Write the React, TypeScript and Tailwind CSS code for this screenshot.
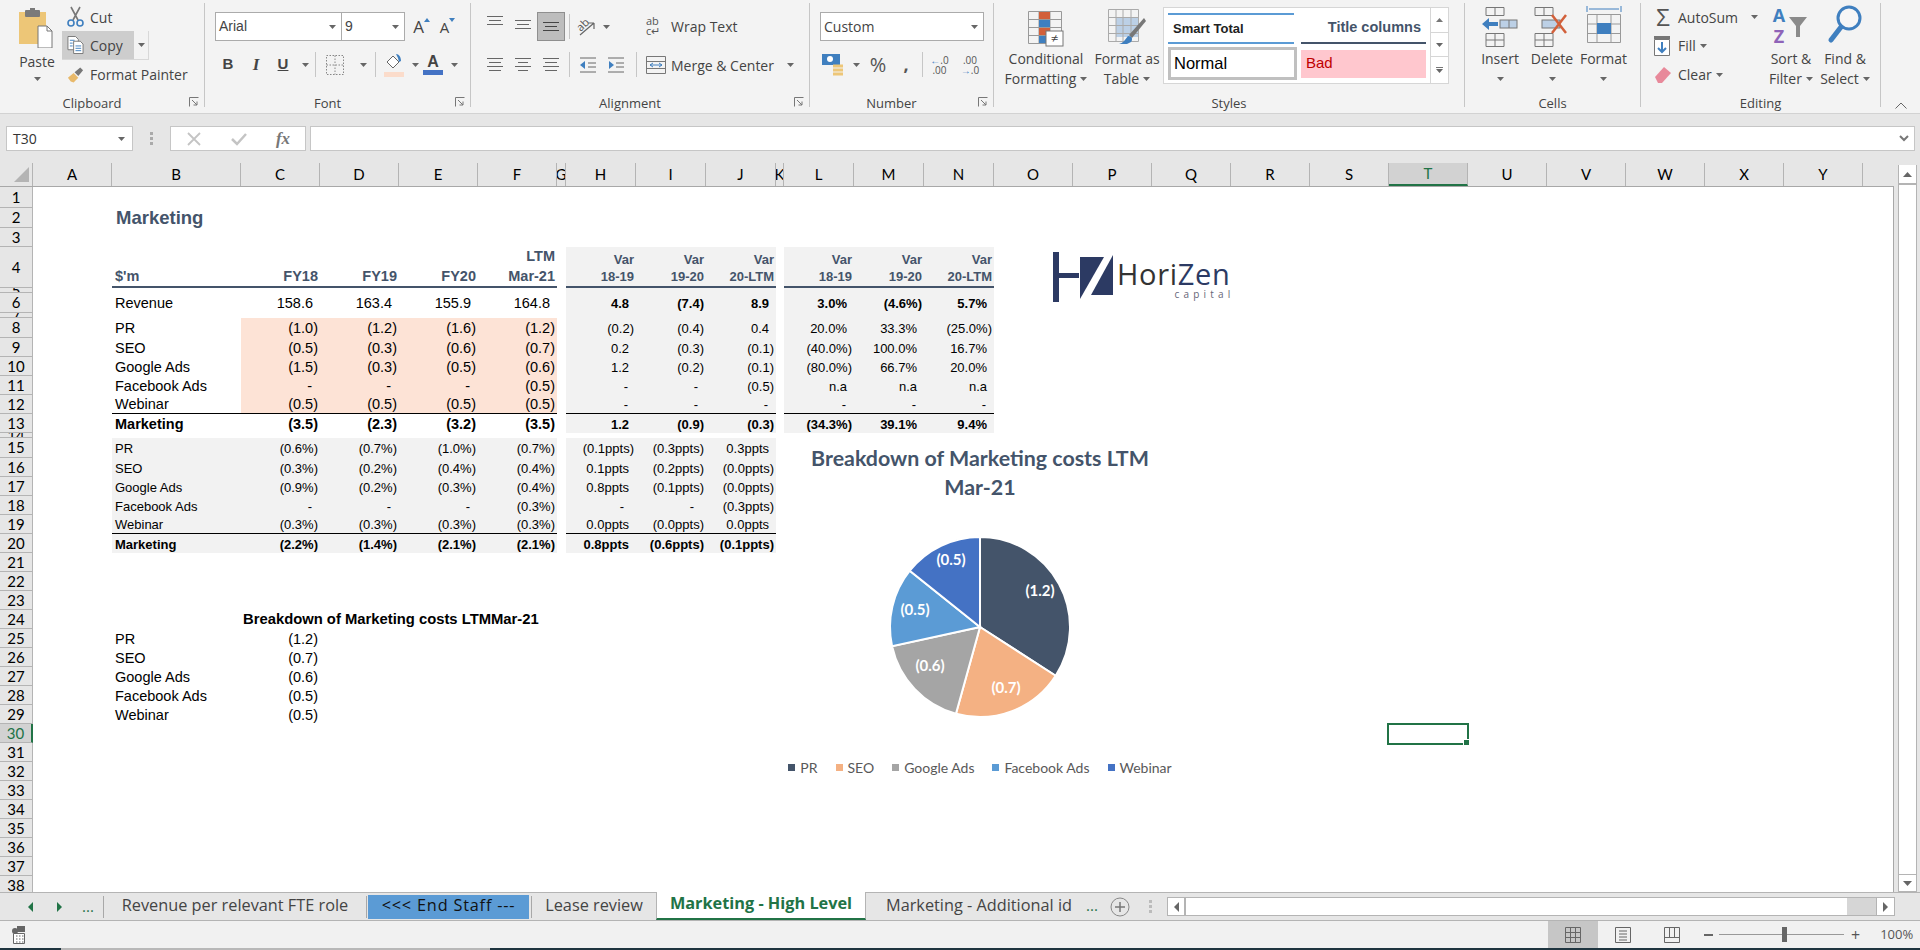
import type { ReactNode } from "react";

const Caret = ({ c = "#666" }: { c?: string }) => (
  <svg width="7" height="4" viewBox="0 0 7 4" className="inline-block shrink-0">
    <polygon points="0,0 7,0 3.5,4" fill={c} />
  </svg>
);

const Launcher = () => (
  <svg width="10" height="10" viewBox="0 0 10 10" className="shrink-0">
    <path d="M0.5 9.5V0.5H9.5M3 3l5 5M8 4.5V8H4.5" fill="none" stroke="#777" strokeWidth="1" />
  </svg>
);

const Sep = ({ h = "h-[25px]" }: { h?: string }) => <div className={`w-px bg-[#c6c6c6] ${h}`} />;

const Slot = ({ w, children }: { w: string; children?: ReactNode }) => (
  <div className={`flex h-full shrink-0 items-center justify-center ${w}`}>{children}</div>
);

const Group = ({
  w,
  label,
  launcher,
  children,
}: {
  w: string;
  label: string;
  launcher?: boolean;
  children: ReactNode;
}) => (
  <div className={`flex h-[104px] shrink-0 flex-col border-r border-[#c6c6c6] ${w}`}>
    <div className="flex h-[92px] min-h-0">{children}</div>
    <div className="flex h-[12px] items-center justify-center pt-[3px]">
      <div className={`relative w-full text-center text-[13px] leading-[16px] text-[#444] ${launcher ? "pr-[20px]" : ""}`}>
        {label}
        {launcher && (
          <span className="absolute top-[2px] right-[5px] flex">
            <Launcher />
          </span>
        )}
      </div>
    </div>
  </div>
);

const PasteIcon = () => (
  <svg width="36" height="40" viewBox="0 0 36 40">
    <rect x="0" y="4" width="27" height="32" fill="#edc677" />
    <rect x="6" y="2" width="15" height="7" rx="1" fill="#7a7a7a" />
    <rect x="11" y="0" width="5" height="4" fill="#7a7a7a" />
    <path d="M19 18h9l5 5v17H19z" fill="#fff" stroke="#777" />
    <path d="M28 18v5h5" fill="none" stroke="#777" />
  </svg>
);

const CutIcon = () => (
  <svg width="17" height="22" viewBox="0 0 17 22">
    <path d="M4 1l7 13M13 1L6 14" stroke="#777" strokeWidth="1.6" />
    <circle cx="4" cy="17" r="3" fill="none" stroke="#3f7fbf" strokeWidth="1.6" />
    <circle cx="13" cy="17" r="3" fill="none" stroke="#3f7fbf" strokeWidth="1.6" />
  </svg>
);

const CopyIcon = () => (
  <svg width="18" height="20" viewBox="0 0 18 20">
    <path d="M1 1h8l3 3v11H1z" fill="#fff" stroke="#777" />
    <path d="M7 6h7l3 3v10H7z" fill="#fff" stroke="#777" />
    <path d="M3 5h5M3 8h3M3 11h3M9 11h6M9 13.500h6M9 16h6" stroke="#3f7fbf" />
  </svg>
);

const BrushIcon = () => (
  <svg width="18" height="18" viewBox="0 0 18 18">
    <path d="M1 12l6-5 5 5-5 5-3-1z" fill="#e8b96a" />
    <path d="M8 6l6-5 3 3-5 6z" fill="#777" />
  </svg>
);

const Lines = ({ widths, active }: { widths: number[]; active?: boolean }) => (
  <svg width="16" height="16" viewBox="0 0 16 16">
    {widths.map((w, i) => (
      <rect
        key={i}
        x={(16 - w) / 2}
        y={1 + i * 4}
        width={w}
        height="1"
        fill={active ? "#444" : "#666"}
      />
    ))}
  </svg>
);

const MiniGrid = () => (
  <svg width="18" height="20" viewBox="0 0 18 20">
    <path d="M.5.500h17v19H.5zM9 .5v19M.5 10h17" fill="none" stroke="#888" strokeDasharray="1.500 1.500" />
  </svg>
);

const Clipboard = () => (
  <Group w="w-[205px]" label="Clipboard" launcher>
    <div className="flex w-[62px] flex-col items-center pt-[5px] pl-[12px] text-[14px] leading-[18px] text-[#444]">
      <PasteIcon />
      <div className="mt-[5px]">Paste</div>
      <div className="mt-[6px] flex">
        <Caret />
      </div>
    </div>
    <div className="flex flex-col text-[14px] text-[#444]">
      <div className="flex h-[28px] items-center pl-[5px]">
        <span className="mr-[6px] flex w-[17px]">
          <CutIcon />
        </span>
        Cut
      </div>
      <div className="flex h-[29px] w-[87px] border-r border-b border-[#d8d8d8]">
        <div className="flex w-[72px] items-center bg-[#cdcdcd] pl-[5px]">
          <span className="mr-[6px] flex w-[17px]">
            <CopyIcon />
          </span>
          Copy
        </div>
        <div className="flex flex-1 items-center justify-center">
          <Caret />
        </div>
      </div>
      <div className="flex h-[29px] items-center pl-[5px] whitespace-nowrap">
        <span className="mr-[6px] flex w-[17px]">
          <BrushIcon />
        </span>
        Format Painter
      </div>
    </div>
  </Group>
);

const FontGroup = () => (
  <Group w="w-[266px]" label="Font" launcher>
    <div className="flex flex-col pt-[9px] pl-[10px] text-[#444]">
      <div className="flex h-[29px] items-center">
        <div className="flex h-[29px] w-[127px] items-center justify-between border border-[#ababab] bg-white pr-[5px] pl-[3px] font-['Liberation_Sans',sans-serif] text-[14px]">
          Arial
          <Caret />
        </div>
        <div className="flex h-[29px] w-[63px] items-center justify-between border border-l-0 border-[#ababab] bg-white pr-[5px] pl-[3px] font-['Liberation_Sans',sans-serif] text-[14px]">
          9
          <Caret />
        </div>
        <div className="flex w-[26px] items-start justify-center pl-[7px] text-[17px] leading-[20px]">
          A
          <svg width="6" height="4" viewBox="0 0 6 4" className="mt-[1px]">
            <polygon points="0,4 6,4 3,0" fill="#3f7fbf" />
          </svg>
        </div>
        <div className="flex w-[26px] items-start justify-center pl-[7px] text-[15px] leading-[20px]">
          A
          <svg width="6" height="4" viewBox="0 0 6 4" className="mt-[1px]">
            <polygon points="0,0 6,0 3,4" fill="#3f7fbf" />
          </svg>
        </div>
      </div>
      <div className="mt-[9px] flex h-[29px] items-center font-['Liberation_Serif',serif] text-[17px]">
        <Slot w="w-[26px]">
          <b className="font-['Liberation_Sans',sans-serif] text-[15px]">B</b>
        </Slot>
        <Slot w="w-[30px]">
          <i className="font-bold">I</i>
        </Slot>
        <Slot w="w-[24px]">
          <b className="font-['Liberation_Sans',sans-serif] text-[15px] underline">U</b>
        </Slot>
        <Slot w="w-[20px]">
          <Caret />
        </Slot>
        <Sep />
        <Slot w="w-[38px]">
          <MiniGrid />
        </Slot>
        <Slot w="w-[4px]" />
        <Slot w="w-[10px]">
          <Caret />
        </Slot>
        <Slot w="w-[7px]" />
        <Sep />
        <Slot w="w-[36px]">
          <svg width="20" height="24" viewBox="0 0 20 24">
            <path d="M3 9l6-6 6 6-6 6z" fill="#fff" stroke="#666" />
            <path d="M12 1c3 0 5 3 5 7l-2 1-1-4z" fill="#3f7fbf" />
            <rect x="0" y="19" width="20" height="5" fill="#fbdccb" />
          </svg>
        </Slot>
        <Slot w="w-[6px]">
          <Caret />
        </Slot>
        <Slot w="w-[30px]">
          <div className="flex flex-col items-center">
            <b className="font-['Liberation_Sans',sans-serif] text-[16px] leading-[16px] text-[#444]">A</b>
            <div className="h-[5px] w-[20px] bg-[#4472c4]" />
          </div>
        </Slot>
        <Slot w="w-[12px]">
          <Caret />
        </Slot>
      </div>
    </div>
  </Group>
);

const Alignment = () => (
  <Group w="w-[339px]" label="Alignment" launcher>
    <div className="flex flex-col pt-[9px] pl-[10px]">
      <div className="flex h-[29px] items-center">
        <Slot w="w-[28px]">
          <div className="-mt-[8px] flex">
            <Lines widths={[16, 12, 16]} />
          </div>
        </Slot>
        <Slot w="w-[28px]">
          <Lines widths={[16, 12, 16]} />
        </Slot>
        <Slot w="w-[28px]">
          <div className="flex h-[29px] w-[28px] items-end justify-center border border-[#8f8f8f] bg-[#bdbdbd] pb-[3px]">
            <Lines widths={[16, 12, 16]} active />
          </div>
        </Slot>
        <Slot w="w-[4px]" />
        <Sep />
        <Slot w="w-[32px]">
          <svg width="22" height="22" viewBox="0 0 22 22">
            <text x="9" y="12" fontSize="11" fill="#555" transform="rotate(-45 9 10)" textAnchor="middle">ab</text>
            <path d="M5 19L19 7M19 7v6M19 7h-6" fill="none" stroke="#666" strokeWidth="1.200" />
          </svg>
        </Slot>
        <Slot w="w-[8px]">
          <Caret />
        </Slot>
      </div>
      <div className="mt-[9px] flex h-[29px] items-center">
        <Slot w="w-[28px]">
          <Lines widths={[16, 12, 16, 12]} />
        </Slot>
        <Slot w="w-[28px]">
          <Lines widths={[16, 10, 16, 10]} />
        </Slot>
        <Slot w="w-[28px]">
          <Lines widths={[16, 12, 16, 12]} />
        </Slot>
        <Slot w="w-[4px]" />
        <Sep />
        <Slot w="w-[36px]">
          <svg width="18" height="18" viewBox="0 0 18 18">
            <path d="M1 2h16M9 7h8M9 11h8M1 16h16" stroke="#666" />
            <path d="M1 9l5-4v8z" fill="#3f7fbf" />
          </svg>
        </Slot>
        <Slot w="w-[20px]">
          <svg width="18" height="18" viewBox="0 0 18 18">
            <path d="M1 2h16M9 7h8M9 11h8M1 16h16" stroke="#666" />
            <path d="M7 9l-5-4v8z" fill="#3f7fbf" />
          </svg>
        </Slot>
        <Slot w="w-[10px]" />
        <Sep />
      </div>
    </div>
    <div className="flex flex-col pt-[8px] pl-[9px] text-[14px] text-[#444]">
      <div className="flex h-[30px] items-center whitespace-nowrap">
        <span className="mr-[5px] flex w-[20px] flex-col text-[11px] leading-[10px] text-[#555]">
          <span>ab</span>
          <span>c↵</span>
        </span>
        Wrap Text
      </div>
      <div className="mt-[9px] flex h-[30px] items-center whitespace-nowrap">
        <svg width="20" height="20" viewBox="0 0 20 20" className="mr-[5px]">
          <path d="M.5 1.500h19v17H.5zM.5 6.500h19M.5 13.500h19" fill="none" stroke="#777" />
          <path d="M4 10h12M4 10l3-2M4 10l3 2M16 10l-3-2M16 10l-3 2" fill="none" stroke="#3f7fbf" />
        </svg>
        Merge &amp; Center
        <span className="ml-[13px] flex">
          <Caret />
        </span>
      </div>
    </div>
  </Group>
);

const NumberGroup = () => (
  <Group w="w-[184px]" label="Number" launcher>
    <div className="flex flex-col pt-[9px] pl-[10px]">
      <div className="flex h-[29px] w-[164px] items-center justify-between border border-[#ababab] bg-white pr-[5px] pl-[3px] text-[14px] text-[#444]">
        Custom
        <Caret />
      </div>
      <div className="mt-[9px] flex h-[29px] items-center text-[#555]">
        <Slot w="w-[26px]">
          <svg width="22" height="24" viewBox="0 0 22 24">
            <rect x="0" y="1" width="18" height="11" fill="#3f7fbf" />
            <circle cx="8" cy="6" r="3" fill="#fff" />
            <path d="M11 13h10M11 17h10M11 21h10" stroke="#edc677" strokeWidth="3" />
          </svg>
        </Slot>
        <Slot w="w-[20px]">
          <Caret />
        </Slot>
        <Slot w="w-[24px]">
          <span className="text-[20px]">%</span>
        </Slot>
        <Slot w="w-[32px]">
          <b className="text-[18px]">,</b>
        </Slot>
        <Sep />
        <Slot w="w-[33px]">
          <span className="flex flex-col items-center text-[10px] leading-[10px]">
            <span>
              <span className="text-[#3f7fbf]">←</span>.0
            </span>
            <span>.00</span>
          </span>
        </Slot>
        <Slot w="w-[28px]">
          <span className="flex flex-col items-center text-[10px] leading-[10px]">
            <span>.00</span>
            <span>
              <span className="text-[#3f7fbf]">→</span>.0
            </span>
          </span>
        </Slot>
      </div>
    </div>
  </Group>
);

const BigButton = ({
  w,
  icon,
  one,
  two,
  caret,
}: {
  w: string;
  icon: ReactNode;
  one: string;
  two?: string;
  caret?: boolean;
}) => (
  <div className={`flex shrink-0 flex-col items-center text-[14px] leading-[20px] whitespace-nowrap text-[#444] ${w}`}>
    <div className="flex h-[44px] items-end">{icon}</div>
    <div className="mt-[2px]">{one}</div>
    <div className="flex h-[20px] items-center gap-[4px]">
      {two}
      {caret && <Caret />}
    </div>
  </div>
);

const CondIcon = () => (
  <svg width="36" height="36" viewBox="0 0 36 36">
    <path d="M.5.500h33v32H.5zM11 .5v32M22 .5v32M.5 8.500h33M.5 16.500h33M.5 24.500h33" fill="none" stroke="#999" />
    <rect x="11" y="1" width="11" height="7" fill="#d2603a" />
    <rect x="11" y="9" width="11" height="7" fill="#3f7fbf" />
    <rect x="11" y="17" width="11" height="7" fill="#d2603a" />
    <rect x="11" y="25" width="11" height="7" fill="#3f7fbf" />
    <rect x="18" y="20" width="17" height="15" fill="#fff" stroke="#777" />
    <text x="26.500" y="32" textAnchor="middle" fontSize="13" fill="#444">≠</text>
  </svg>
);

const TableIcon = () => (
  <svg width="38" height="38" viewBox="0 0 38 38">
    <rect x="8" y="8" width="22" height="20" fill="#bcd0e6" />
    <path d="M.5.500h30v32H.5zM8 .5v32M15 .5v32M23 .5v32M.5 8.500h30M.5 16.500h30M.5 24.500h30" fill="none" stroke="#aaa" />
    <path d="M36 9l2 3-14 17-3-3z" fill="#777" />
    <path d="M20 27c4 0 5 3 3 6l-4 2h-8c4-1 6-4 9-8z" fill="#3f7fbf" />
  </svg>
);

const Gallery = () => (
  <div className="mt-[4px] flex h-[77px] w-[286px] shrink-0 border border-[#d6d6d6] bg-white">
    <div className="flex w-[267px] flex-col">
      <div className="flex h-[36px] pt-[5px] font-['Liberation_Sans',sans-serif] font-bold">
        <div className="ml-[4px] flex w-[126px] items-center border-t-2 border-b-2 border-t-[#5b9bd5] border-b-[#5b9bd5] pl-[5px] text-[13px] text-[#222]">
          Smart Total
        </div>
        <div className="ml-[7px] flex w-[125px] items-center justify-end border-b-2 border-[#44546a] pr-[5px] text-[14.5px] text-[#44546a]">
          Title columns
        </div>
      </div>
      <div className="mt-[3px] flex items-center pl-[4px] font-['Liberation_Sans',sans-serif] text-[16.5px]">
        <div className="flex h-[33px] w-[129px] items-center border-[3px] border-[#c0c0c0] pl-[3px] text-black">
          Normal
        </div>
        <div className="ml-[4px] flex h-[28px] w-[125px] items-center bg-[#ffc7ce] pl-[5px] text-[15px] text-[#c00000]">
          Bad
        </div>
      </div>
    </div>
    <div className="flex w-[18px] flex-col border-l border-[#d6d6d6]">
      <div className="flex h-[25px] items-center justify-center border-b border-[#d6d6d6]">
        <svg width="7" height="4" viewBox="0 0 7 4">
          <polygon points="0,4 7,4 3.500,0" fill="#777" />
        </svg>
      </div>
      <div className="flex h-[24px] items-center justify-center border-b border-[#d6d6d6]">
        <Caret />
      </div>
      <div className="flex flex-1 flex-col items-center justify-center gap-[1px]">
        <div className="h-px w-[7px] bg-[#777]" />
        <Caret />
      </div>
    </div>
  </div>
);

const Styles = () => (
  <Group w="w-[471px]" label="Styles">
    <div className="flex pl-[12px]">
      <BigButton w="w-[80px]" icon={<CondIcon />} one="Conditional" two="Formatting" caret />
      <BigButton w="w-[78px] pl-[4px]" icon={<TableIcon />} one="Format as" two="Table" caret />
      <div className="ml-[-1px]">
        <Gallery />
      </div>
    </div>
  </Group>
);

const InsertIcon = () => (
  <svg width="36" height="42" viewBox="0 0 36 42">
    <path d="M4 2.500h18v8H4zM13 2.500v8M4 28.500h18v13H4zM13 28.500v13M4 35h18" fill="none" stroke="#777" />
    <rect x="18" y="15" width="17" height="8" fill="#bcd0e6" stroke="#777" />
    <path d="M27 15v8" stroke="#777" />
    <path d="M0 19l7-6v4h9v4H7v4z" fill="#3f7fbf" />
  </svg>
);

const DeleteIcon = () => (
  <svg width="36" height="42" viewBox="0 0 36 42">
    <path d="M1 2.500h18v8H1zM10 2.500v8M1 28.500h18v13H1zM10 28.500v13M1 35h18" fill="none" stroke="#777" />
    <rect x="8" y="15" width="18" height="8" fill="#bcd0e6" stroke="#777" />
    <path d="M18 10l14 18M32 10L18 28" stroke="#d2603a" strokeWidth="2.500" />
  </svg>
);

const FormatIcon = () => (
  <svg width="36" height="42" viewBox="0 0 36 42">
    <path d="M1 1v6M35 1v6M3 4h30" stroke="#3f7fbf" />
    <path d="M1.500 9.500h33v28h-33zM11 9.500v28M25 9.500v28M1.500 19h33M1.500 28.500h33" fill="none" stroke="#999" />
    <rect x="11" y="18" width="14" height="11" fill="#3f7fbf" />
  </svg>
);

const Cells = () => (
  <Group w="w-[176px]" label="Cells">
    <div className="flex pl-[9px]">
      <BigButton w="w-[52px]" icon={<InsertIcon />} one="Insert" caret />
      <BigButton w="w-[52px]" icon={<DeleteIcon />} one="Delete" caret />
      <BigButton w="w-[51px]" icon={<FormatIcon />} one="Format" caret />
    </div>
  </Group>
);

const Editing = () => (
  <Group w="w-[240px]" label="Editing">
    <div className="flex pl-[13px]">
      <div className="flex w-[106px] flex-col text-[14px] text-[#444]">
        <div className="flex h-[28px] items-center">
          <span className="mr-[6px] w-[18px] text-center text-[24px] leading-[20px] text-[#555]">Σ</span>
          AutoSum
          <span className="ml-[13px] flex">
            <Caret />
          </span>
        </div>
        <div className="flex h-[29px] items-center">
          <svg width="16" height="20" viewBox="0 0 16 20" className="mr-[8px]">
            <path d="M.5 3.500h15v16H.5z" fill="#fff" stroke="#777" />
            <rect x="0" y="0" width="16" height="3" fill="#777" />
            <path d="M8 6v10M4 12l4 4 4-4" fill="none" stroke="#3f7fbf" strokeWidth="2" />
          </svg>
          Fill
          <span className="ml-[4px] flex">
            <Caret />
          </span>
        </div>
        <div className="flex h-[29px] items-center">
          <svg width="18" height="18" viewBox="0 0 18 18" className="mr-[6px]">
            <path d="M1 11l9-10 7 6-9 10H4z" fill="#e8899a" />
          </svg>
          Clear
          <span className="ml-[4px] flex">
            <Caret />
          </span>
        </div>
      </div>
      <BigButton
        w="w-[62px]"
        icon={
          <svg width="38" height="42" viewBox="0 0 38 42">
            <text x="7" y="17" textAnchor="middle" fontSize="18" fontWeight="700" fill="#3f7fbf">A</text>
            <text x="7" y="38" textAnchor="middle" fontSize="18" fontWeight="700" fill="#8e63b8">Z</text>
            <path d="M17 12h18l-7 9v11h-4V21z" fill="#8a8a8a" />
          </svg>
        }
        one="Sort &"
        two="Filter"
        caret
      />
      <BigButton
        w="w-[46px]"
        icon={
          <svg width="38" height="44" viewBox="0 0 38 44">
            <circle cx="23" cy="15" r="11" fill="#fff" fillOpacity="0.3" stroke="#3f7fbf" strokeWidth="3" />
            <path d="M15 24L5 37" stroke="#3f7fbf" strokeWidth="5" strokeLinecap="round" />
          </svg>
        }
        one="Find &"
        two="Select"
        caret
      />
    </div>
  </Group>
);

const Ribbon = () => (
  <div className="flex h-[114px] shrink-0 border-b border-[#d2d2d2] bg-[#f3f3f3] pt-[3px]">
    <Clipboard />
    <FontGroup />
    <Alignment />
    <NumberGroup />
    <Styles />
    <Cells />
    <Editing />
    <div className="flex flex-1 items-end justify-center pb-[4px]">
      <svg width="12" height="7" viewBox="0 0 12 7">
        <path d="M.5 6.500L6 1l5.500 5.500" fill="none" stroke="#666" />
      </svg>
    </div>
  </div>
);

const FormulaBar = () => (
  <div className="flex h-[49px] shrink-0 items-start bg-[#e6e6e6] pt-[12px] pl-[6px] text-[14px]">
    <div className="flex h-[25px] w-[127px] items-center justify-between border border-[#c6c6c6] bg-white pr-[7px] pl-[6px] text-[#333]">
      T30
      <Caret />
    </div>
    <div className="flex h-[25px] w-[37px] flex-col items-center justify-center gap-[2px]">
      <div className="h-[3px] w-[3px] bg-[#aaa]" />
      <div className="h-[3px] w-[3px] bg-[#aaa]" />
      <div className="h-[3px] w-[3px] bg-[#aaa]" />
    </div>
    <div className="flex h-[25px] w-[136px] items-center border border-[#c6c6c6] bg-white text-[#aaa]">
      <div className="flex w-[46px] justify-center">
        <svg width="14" height="14" viewBox="0 0 14 14">
          <path d="M1 1l12 12M13 1L1 13" stroke="#c4c4c4" strokeWidth="1.800" />
        </svg>
      </div>
      <div className="flex w-[44px] justify-center">
        <svg width="16" height="14" viewBox="0 0 16 14">
          <path d="M1 7l5 5 9-10" fill="none" stroke="#c4c4c4" strokeWidth="2.500" />
        </svg>
      </div>
      <div className="flex w-[44px] justify-center font-['Liberation_Serif',serif] text-[17px] font-bold text-[#777] italic">
        fx
      </div>
    </div>
    <div className="ml-[4px] flex h-[25px] w-[1605px] items-center justify-end border border-[#c6c6c6] bg-white pr-[5px]">
      <svg width="10" height="7" viewBox="0 0 10 7">
        <path d="M1 1l4 4 4-4" fill="none" stroke="#777" strokeWidth="2" />
      </svg>
    </div>
  </div>
);

const columns: [string, string][] = [
  ["A", "w-[79px]"],
  ["B", "w-[129px]"],
  ["C", "w-[79px]"],
  ["D", "w-[79px]"],
  ["E", "w-[79px]"],
  ["F", "w-[79px]"],
  ["G", "w-[9px]"],
  ["H", "w-[70px]"],
  ["I", "w-[70px]"],
  ["J", "w-[70px]"],
  ["K", "w-[8px]"],
  ["L", "w-[70px]"],
  ["M", "w-[70px]"],
  ["N", "w-[70px]"],
  ["O", "w-[79px]"],
  ["P", "w-[79px]"],
  ["Q", "w-[79px]"],
  ["R", "w-[79px]"],
  ["S", "w-[79px]"],
  ["T", "w-[79px]"],
  ["U", "w-[79px]"],
  ["V", "w-[79px]"],
  ["W", "w-[79px]"],
  ["X", "w-[79px]"],
  ["Y", "w-[79px]"],
];

const ColumnHeaders = () => (
  <div className="flex h-[24px] shrink-0 border-b border-[#a8a8a8] bg-[#e6e6e6] font-['Lato',sans-serif] text-[15px] text-black">
    <div className="flex w-[33px] shrink-0 items-center justify-end border-r border-[#b4b4b4] pr-[3px]">
      <svg width="15" height="15" viewBox="0 0 15 15">
        <polygon points="15,0 15,15 0,15" fill="#b4b4b4" />
      </svg>
    </div>
    {columns.map(([label, w]) => (
      <div
        key={label}
        className={`flex shrink-0 items-center justify-center overflow-hidden border-r border-[#b4b4b4] ${w} ${
          label === "T" ? "border-b-2 border-b-[#217346] bg-[#d2d2d2] text-[#217346]" : ""
        }`}
      >
        {label}
      </div>
    ))}
  </div>
);

type Row = {
  n: number;
  h: string;
  label?: string;
  title?: string;
  c?: string[];
  v?: string[];
  p?: string[];
  small?: boolean;
  bold?: boolean;
  vBold?: boolean;
  labelBg?: string;
  cBg?: string;
  vBg?: string;
  pBg?: string;
  line?: boolean;
};

const G = "bg-[#f2f2f2]";
const P = "bg-[#fde3d6]";

const rows: Row[] = [
  { n: 5, h: "h-[5px]", vBg: G, pBg: G },
  { n: 6, h: "h-[20px]", label: "Revenue", c: ["158.6", "163.4", "155.9", "164.8"], v: ["4.8", "(7.4)", "8.9"], p: ["3.0%", "(4.6%)", "5.7%"], vBold: true, vBg: G, pBg: G },
  { n: 7, h: "h-[5px]", vBg: G, pBg: G },
  { n: 8, h: "h-[20px]", label: "PR", c: ["(1.0)", "(1.2)", "(1.6)", "(1.2)"], v: ["(0.2)", "(0.4)", "0.4"], p: ["20.0%", "33.3%", "(25.0%)"], cBg: P, vBg: G, pBg: G },
  { n: 9, h: "h-[19px]", label: "SEO", c: ["(0.5)", "(0.3)", "(0.6)", "(0.7)"], v: ["0.2", "(0.3)", "(0.1)"], p: ["(40.0%)", "100.0%", "16.7%"], cBg: P, vBg: G, pBg: G },
  { n: 10, h: "h-[19px]", label: "Google Ads", c: ["(1.5)", "(0.3)", "(0.5)", "(0.6)"], v: ["1.2", "(0.2)", "(0.1)"], p: ["(80.0%)", "66.7%", "20.0%"], cBg: P, vBg: G, pBg: G },
  { n: 11, h: "h-[19px]", label: "Facebook Ads", c: ["-", "-", "-", "(0.5)"], v: ["-", "-", "(0.5)"], p: ["n.a", "n.a", "n.a"], cBg: P, vBg: G, pBg: G },
  { n: 12, h: "h-[19px]", label: "Webinar", c: ["(0.5)", "(0.5)", "(0.5)", "(0.5)"], v: ["-", "-", "-"], p: ["-", "-", "-"], cBg: P, vBg: G, pBg: G, line: true },
  { n: 13, h: "h-[19px]", label: "Marketing", c: ["(3.5)", "(2.3)", "(3.2)", "(3.5)"], v: ["1.2", "(0.9)", "(0.3)"], p: ["(34.3%)", "39.1%", "9.4%"], bold: true, vBold: true, vBg: G, pBg: G },
  { n: 14, h: "h-[5px]" },
  { n: 15, h: "h-[20px]", label: "PR", c: ["(0.6%)", "(0.7%)", "(1.0%)", "(0.7%)"], v: ["(0.1ppts)", "(0.3ppts)", "0.3ppts"], small: true, labelBg: G, cBg: G, vBg: G },
  { n: 16, h: "h-[19px]", label: "SEO", c: ["(0.3%)", "(0.2%)", "(0.4%)", "(0.4%)"], v: ["0.1ppts", "(0.2ppts)", "(0.0ppts)"], small: true, labelBg: G, cBg: G, vBg: G },
  { n: 17, h: "h-[19px]", label: "Google Ads", c: ["(0.9%)", "(0.2%)", "(0.3%)", "(0.4%)"], v: ["0.8ppts", "(0.1ppts)", "(0.0ppts)"], small: true, labelBg: G, cBg: G, vBg: G },
  { n: 18, h: "h-[19px]", label: "Facebook Ads", c: ["-", "-", "-", "(0.3%)"], v: ["-", "-", "(0.3ppts)"], small: true, labelBg: G, cBg: G, vBg: G },
  { n: 19, h: "h-[19px]", label: "Webinar", c: ["(0.3%)", "(0.3%)", "(0.3%)", "(0.3%)"], v: ["0.0ppts", "(0.0ppts)", "0.0ppts"], small: true, labelBg: G, cBg: G, vBg: G, line: true },
  { n: 20, h: "h-[19px]", label: "Marketing", c: ["(2.2%)", "(1.4%)", "(2.1%)", "(2.1%)"], v: ["0.8ppts", "(0.6ppts)", "(0.1ppts)"], small: true, bold: true, vBold: true, labelBg: G, cBg: G, vBg: G },
  { n: 21, h: "h-[19px]" },
  { n: 22, h: "h-[19px]" },
  { n: 23, h: "h-[19px]" },
  { n: 24, h: "h-[19px]", title: "Breakdown of Marketing costs LTMMar-21" },
  { n: 25, h: "h-[19px]", label: "PR", c: ["(1.2)"] },
  { n: 26, h: "h-[19px]", label: "SEO", c: ["(0.7)"] },
  { n: 27, h: "h-[19px]", label: "Google Ads", c: ["(0.6)"] },
  { n: 28, h: "h-[19px]", label: "Facebook Ads", c: ["(0.5)"] },
  { n: 29, h: "h-[19px]", label: "Webinar", c: ["(0.5)"] },
  { n: 30, h: "h-[19px]" },
  { n: 31, h: "h-[19px]" },
  { n: 32, h: "h-[19px]" },
  { n: 33, h: "h-[19px]" },
  { n: 34, h: "h-[19px]" },
  { n: 35, h: "h-[19px]" },
  { n: 36, h: "h-[19px]" },
  { n: 37, h: "h-[19px]" },
  { n: 38, h: "h-[19px]" },
];

const RowHead = ({ n, h }: { n: number; h: string }) => (
  <div
    className={`flex w-[33px] shrink-0 items-center justify-center overflow-hidden border-r border-b border-[#b4b4b4] font-['Lato',sans-serif] text-[15px] ${h} ${
      n === 30 ? "border-r-2 border-r-[#217346] bg-[#d2d2d2] text-[#217346]" : "bg-[#e6e6e6] text-black"
    }`}
  >
    {n}
  </div>
);

const pad = (t: string, pct: boolean) => {
  if (t.endsWith(")")) return "pr-[2px]";
  if (t === "-") return pct ? "pr-[12px]" : "pr-[8px]";
  return "pr-[7px]";
};

const Num = ({ t, w, cls, pct }: { t?: string; w: string; cls: string; pct?: boolean }) => (
  <div
    className={`flex h-full shrink-0 items-center justify-end pt-[2px] whitespace-nowrap ${w} ${cls} ${t ? pad(t, !!pct) : ""}`}
  >
    {t}
  </div>
);

const SheetRow = ({ r }: { r: Row }) => {
  const line = r.line ? "border-b border-black" : "";
  const size = r.small ? "text-[13px]" : "text-[14.5px]";
  const weight = r.bold ? "font-bold" : "";
  const left = `${size} ${weight} ${line}`;
  const right = `text-[13px] ${r.vBold ? "font-bold" : ""} ${line}`;
  const c = r.c ?? [];
  const v = r.v ?? [];
  const p = r.p ?? [];
  return (
    <div className={`flex shrink-0 ${r.h}`}>
      <RowHead n={r.n} h={r.h} />
      <div className="w-[79px] shrink-0" />
      <div className={`flex w-[129px] shrink-0 items-center pt-[2px] pl-[3px] whitespace-nowrap ${r.labelBg ?? ""} ${left}`}>
        {r.label}
      </div>
      {r.title ? (
        <div className="flex w-[316px] shrink-0 items-center pl-[2px] text-[14.8px] font-bold whitespace-nowrap">
          {r.title}
        </div>
      ) : (
        [0, 1, 2, 3].map((i) => (
          <Num key={i} t={c[i]} w="w-[79px]" cls={`${r.cBg ?? ""} ${left}`} />
        ))
      )}
      <div className="w-[9px] shrink-0" />
      {[0, 1, 2].map((i) => (
        <Num key={i} t={v[i]} w="w-[70px]" cls={`${r.vBg ?? ""} ${r.vBg ? right : ""}`} pct={r.small} />
      ))}
      <div className="w-[8px] shrink-0" />
      {[0, 1, 2].map((i) => (
        <Num key={i} t={p[i]} w="w-[70px]" cls={`${r.pBg ?? ""} ${r.pBg ? right : ""}`} />
      ))}
    </div>
  );
};

const Head = ({ one, two, w, bg }: { one?: string; two: string; w: string; bg?: string }) => (
  <div
    className={`flex h-full shrink-0 flex-col items-end justify-end border-b-2 border-[#44546a] pr-[2px] font-bold whitespace-nowrap text-[#44546a] ${w} ${
      bg ? `${bg} pb-[1px] leading-[17px]` : "leading-[20px]"
    }`}
  >
    {one && <div>{one}</div>}
    <div>{two}</div>
  </div>
);

const TopRows = () => (
  <>
    <div className="flex h-[21px] shrink-0">
      <RowHead n={1} h="h-[21px]" />
    </div>
    <div className="flex h-[20px] shrink-0">
      <RowHead n={2} h="h-[20px]" />
      <div className="ml-[79px] flex items-center pl-[4px] text-[18.5px] font-bold text-[#44546a]">Marketing</div>
    </div>
    <div className="flex h-[19px] shrink-0">
      <RowHead n={3} h="h-[19px]" />
    </div>
    <div className="flex h-[41px] shrink-0">
      <RowHead n={4} h="h-[41px]" />
      <div className="w-[79px] shrink-0" />
      <div className="flex w-[129px] shrink-0 items-end border-b-2 border-[#44546a] pl-[3px] text-[14.5px] leading-[20px] font-bold text-[#44546a]">
        $'m
      </div>
      <div className="flex text-[14.5px]">
        <Head two="FY18" w="w-[79px]" />
        <Head two="FY19" w="w-[79px]" />
        <Head two="FY20" w="w-[79px]" />
        <Head one="LTM" two="Mar-21" w="w-[79px]" />
      </div>
      <div className="w-[9px] shrink-0" />
      <div className="flex text-[13px]">
        <Head one="Var" two="18-19" w="w-[70px]" bg={G} />
        <Head one="Var" two="19-20" w="w-[70px]" bg={G} />
        <Head one="Var" two="20-LTM" w="w-[70px]" bg={G} />
      </div>
      <div className="w-[8px] shrink-0" />
      <div className="flex text-[13px]">
        <Head one="Var" two="18-19" w="w-[70px]" bg={G} />
        <Head one="Var" two="19-20" w="w-[70px]" bg={G} />
        <Head one="Var" two="20-LTM" w="w-[70px]" bg={G} />
      </div>
    </div>
  </>
);

const slices: [number, number, string, string, number, number][] = [
  [0, 122.8, "#44546a", "(1.2)", 155, 64],
  [122.8, 195.5, "#f4b183", "(0.7)", 121, 161],
  [195.5, 257.7, "#a5a5a5", "(0.6)", 45, 139],
  [257.7, 308.7, "#5b9bd5", "(0.5)", 30, 83],
  [308.7, 360, "#4472c4", "(0.5)", 66, 33],
];

const polar = (deg: number) => {
  const a = ((deg - 90) * Math.PI) / 180;
  return `${95 + 90 * Math.cos(a)} ${95 + 90 * Math.sin(a)}`;
};

const legend: [string, string][] = [
  ["PR", "bg-[#44546a]"],
  ["SEO", "bg-[#f4b183]"],
  ["Google Ads", "bg-[#a5a5a5]"],
  ["Facebook Ads", "bg-[#5b9bd5]"],
  ["Webinar", "bg-[#4472c4]"],
];

const Chart = () => (
  <div className="absolute top-[257px] left-[780px] flex w-[400px] flex-col items-center font-['Lato',sans-serif]">
    <div className="text-center text-[21.4px] leading-[29px] font-bold text-[#44546a]">
      <div className="whitespace-nowrap">Breakdown of Marketing costs LTM</div>
      <div>Mar-21</div>
    </div>
    <svg width="190" height="190" viewBox="0 0 190 190" className="mt-[30px]">
      {slices.map(([a, b, fill]) => (
        <path
          key={a}
          d={`M95 95L${polar(a)}A90 90 0 ${b - a > 180 ? 1 : 0} 1 ${polar(b)}Z`}
          fill={fill}
          stroke="#fff"
          strokeWidth="2"
        />
      ))}
      {slices.map(([a, , , t, x, y]) => (
        <text key={a} x={x} y={y} textAnchor="middle" fontSize="15" fontWeight="700" fill="#fff">
          {t}
        </text>
      ))}
    </svg>
    <div className="mt-[35px] flex h-[20px] items-center gap-[18px] text-[14px] text-[#595959]">
      {legend.map(([t, bg]) => (
        <div key={t} className="flex items-center gap-[5px] whitespace-nowrap">
          <div className={`h-[7px] w-[7px] ${bg}`} />
          {t}
        </div>
      ))}
    </div>
  </div>
);

const Logo = () => (
  <div className="absolute top-[65px] left-[1053px] flex">
    <svg width="62" height="50" viewBox="0 0 62 50">
      <rect x="0" y="0" width="6" height="50" fill="#2c3a63" />
      <rect x="6" y="21" width="20" height="5" fill="#2c3a63" />
      <polygon points="27,5 51,5 27,47" fill="#2c3a63" />
      <polygon points="60,3 60,43 38,43" fill="#2c3a63" />
    </svg>
    <div className="ml-[2px] flex flex-col items-end font-['Open_Sans',sans-serif]">
      <div className="mt-[6px] h-[32px] text-[29px] leading-[32px] font-medium tracking-[0.7px] text-[#333]">
        Hori<span className="text-[#2c3a63]">Zen</span>
      </div>
      <div className="-mr-[4px] -mt-[1px] text-[10px] leading-[11px] tracking-[4.2px] text-[#667]">capital</div>
    </div>
  </div>
);

const Selection = () => (
  <div className="absolute top-[536px] left-[1387px] h-[22px] w-[82px] border-2 border-[#217346]">
    <div className="absolute -right-[3px] -bottom-[3px] h-[7px] w-[7px] border border-white bg-[#217346]" />
  </div>
);

const Sheet = () => (
  <div className="flex min-h-0 flex-1 bg-[#e6e6e6]">
    <div className="flex w-[1894px] shrink-0 flex-col">
      <ColumnHeaders />
      <div className="relative min-h-0 flex-1 overflow-hidden border-r border-[#a8a8a8] bg-white font-['Liberation_Sans',sans-serif] text-black">
        <TopRows />
        {rows.map((r) => (
          <SheetRow key={r.n} r={r} />
        ))}
        <Chart />
        <Logo />
        <Selection />
      </div>
    </div>
    <div className="mt-[2px] ml-[4px] flex w-[19px] shrink-0 flex-col border-x border-[#b4b4b4] bg-white">
      <div className="flex h-[20px] items-center justify-center border-b-2 border-[#b4b4b4]">
        <svg width="9" height="5" viewBox="0 0 9 5">
          <polygon points="0,5 9,5 4.500,0" fill="#666" />
        </svg>
      </div>
      <div className="flex-1" />
      <div className="flex h-[18px] items-center justify-center border-t border-b border-[#b4b4b4]">
        <svg width="9" height="5" viewBox="0 0 9 5">
          <polygon points="0,0 9,0 4.500,5" fill="#666" />
        </svg>
      </div>
    </div>
  </div>
);

const TabSep = () => <div className="h-[22px] w-px bg-[#a8a8a8]" />;

const TabBar = () => (
  <div className="flex h-[29px] shrink-0 items-center border-t border-b border-[#b4b4b4] bg-[#e6e6e6] text-[16.3px] whitespace-nowrap text-[#444]">
    <Slot w="w-[45px] pl-[15px]">
      <svg width="5" height="10" viewBox="0 0 5 10">
        <polygon points="5,0 5,10 0,5" fill="#217346" />
      </svg>
    </Slot>
    <Slot w="w-[28px]">
      <svg width="5" height="10" viewBox="0 0 5 10">
        <polygon points="0,0 0,10 5,5" fill="#217346" />
      </svg>
    </Slot>
    <Slot w="w-[30px] text-[15px] text-[#217346]">...</Slot>
    <TabSep />
    <div className="flex w-[262px] justify-center pb-[3px]">Revenue per relevant FTE role</div>
    <TabSep />
    <div className="ml-[1px] flex h-[24px] w-[161px] items-center justify-center bg-[#5b9bd5] pb-[3px] tracking-[0.8px] text-[#111]">
      &lt;&lt;&lt; End Staff ---
    </div>
    <div className="ml-[2px]">
      <TabSep />
    </div>
    <div className="flex w-[124px] justify-center pb-[3px]">Lease review</div>
    <div className="-mt-[2px] flex h-[28px] w-[210px] items-center justify-center border-x border-b-2 border-x-[#b4b4b4] border-b-[#217346] bg-white pb-[2px] font-bold text-[#217346]">
      Marketing - High Level
    </div>
    <div className="flex w-[220px] pb-[3px] pl-[20px]">Marketing - Additional id</div>
    <div className="w-[24px] pb-[3px] text-[15px] text-[#217346]">...</div>
    <svg width="20" height="20" viewBox="0 0 20 20">
      <circle cx="10" cy="10" r="9" fill="none" stroke="#888" />
      <path d="M10 5v10M5 10h10" stroke="#777" strokeWidth="1.500" />
    </svg>
    <div className="ml-[19px] flex flex-col gap-[2px]">
      <div className="h-[3px] w-[3px] bg-[#bbb]" />
      <div className="h-[3px] w-[3px] bg-[#bbb]" />
      <div className="h-[3px] w-[3px] bg-[#bbb]" />
    </div>
    <div className="ml-[15px] flex h-[19px] w-[728px] shrink-0 border border-[#b4b4b4] bg-white">
      <div className="flex w-[18px] items-center justify-center border-r-2 border-[#b4b4b4]">
        <svg width="5" height="10" viewBox="0 0 5 10">
          <polygon points="5,0 5,10 0,5" fill="#666" />
        </svg>
      </div>
      <div className="flex-1" />
      <div className="w-[29px] bg-[#d6d6d6]" />
      <div className="flex w-[18px] items-center justify-center border-l border-[#b4b4b4]">
        <svg width="5" height="10" viewBox="0 0 5 10">
          <polygon points="0,0 0,10 5,5" fill="#666" />
        </svg>
      </div>
    </div>
  </div>
);

const StatusBar = () => (
  <div className="flex h-[27px] shrink-0 items-center bg-[#f1f1f1] text-[13px] text-[#555]">
    <div className="flex w-[1548px] pl-[12px]">
      <svg width="14" height="18" viewBox="0 0 14 18">
        <circle cx="3" cy="5" r="3" fill="#666" />
        <rect x="5" y="0" width="8" height="6" fill="#666" />
        <path d="M1.500 7.500h11v10h-11z" fill="#fff" stroke="#666" />
        <path d="M4 10h1.500M7 10h1.500M10 10h1.500M4 13h1.500M7 13h1.500M10 13h1.500M4 16h1.500M7 16h1.500M10 16h1.500" stroke="#666" />
      </svg>
    </div>
    <div className="flex h-full w-[50px] items-center justify-center bg-[#c6c6c6]">
      <svg width="16" height="16" viewBox="0 0 16 16">
        <path d="M.5.500h15v15H.5zM5.500.5v15M10.500.5v15M.5 5.500h15M.5 10.500h15" fill="none" stroke="#666" />
      </svg>
    </div>
    <div className="flex w-[49px] justify-center">
      <svg width="16" height="16" viewBox="0 0 16 16">
        <path d="M.5.500h15v15H.5z" fill="none" stroke="#666" />
        <path d="M4 4h8M4 7h8M4 10h8M4 13h8" stroke="#666" />
      </svg>
    </div>
    <div className="flex w-[50px] justify-center">
      <svg width="16" height="16" viewBox="0 0 16 16">
        <path d="M.5.500h15v15H.5zM.5 10.500h15M5.500.5v10M10.500.5v10" fill="none" stroke="#666" />
      </svg>
    </div>
    <div className="ml-[7px] h-[2px] w-[9px] bg-[#666]" />
    <div className="ml-[6px] flex h-[15px] w-[125px] items-center">
      <div className="h-px w-[63px] bg-[#999]" />
      <div className="h-[15px] w-[5px] bg-[#666]" />
      <div className="h-px flex-1 bg-[#999]" />
    </div>
    <div className="ml-[7px] text-[16px] leading-none">+</div>
    <div className="ml-[20px]">100%</div>
  </div>
);

export default function App() {
  return (
    <div className="flex h-[950px] w-[1920px] flex-col overflow-hidden bg-white font-['Open_Sans',sans-serif]">
      <Ribbon />
      <FormulaBar />
      <Sheet />
      <TabBar />
      <StatusBar />
      <div className="flex h-[2px] shrink-0">
        <div className="w-[61px] bg-[#1f3540]" />
        <div className="w-[429px] bg-[#b8b8b8]" />
        <div className="flex-1 bg-[#1f3540]" />
      </div>
    </div>
  );
}
